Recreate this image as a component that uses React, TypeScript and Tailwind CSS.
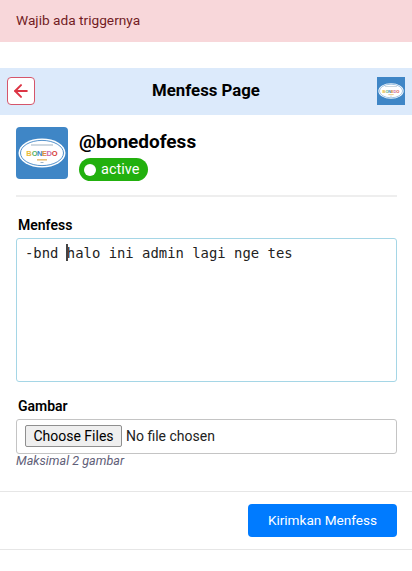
import React from 'react';
import { ArrowLeft } from 'lucide-react';

const Logo: React.FC<{ className?: string }> = ({ className }) => (
  <svg viewBox="0 0 52 52" className={className}>
    <rect width="52" height="52" fill="#3f86c6" />
    <ellipse cx="26" cy="26" rx="23.5" ry="14.5" fill="#ffffff" />
    <ellipse cx="26" cy="26" rx="21.5" ry="12.6" fill="none" stroke="#3f86c6" strokeWidth="0.9" />
    <rect x="15" y="17.5" width="22" height="1" fill="#9fb4c4" />
    <g fontFamily="'Liberation Sans', sans-serif" fontWeight="700" fontSize="7.5" textAnchor="middle">
      <text x="13" y="29" fill="#e8b93a">B</text>
      <text x="18.6" y="29" fill="#58b368">O</text>
      <text x="23.6" y="29" fill="#3f86c6">N</text>
      <text x="28.4" y="29" fill="#e08a3c">E</text>
      <text x="33.2" y="29" fill="#c86dab">D</text>
      <text x="38.6" y="29" fill="#d8403a">O</text>
    </g>
    <rect x="21" y="32" width="10" height="1.6" fill="#e8c17a" />
    <rect x="24.5" y="35" width="3" height="1" fill="#9fb4c4" />
  </svg>
);

export default function App() {
  return (
    <div className="w-[412px] h-[571px] overflow-hidden bg-white text-black font-['Roboto',sans-serif]">
      <div className="h-[42px] bg-[#f8d7da] text-[#721c24] text-[13.7px] leading-[40px] px-4">
        Wajib ada triggernya
      </div>

      <div className="mt-[26px] h-[47px] bg-[#dceafb] flex items-center justify-between pl-[7px] pr-[7px] pb-[1px]">
        <button className="w-[28px] h-[28px] bg-white border border-[#d5566b] rounded-[4px] flex items-center justify-center text-[#dc3545]">
          <ArrowLeft size={20} strokeWidth={2.4} />
        </button>
        <h1 className="text-[16.8px] font-bold">Menfess Page</h1>
        <Logo className="w-[28px] h-[28px]" />
      </div>

      <div className="mx-4 mt-3 pb-[14px] border-b-2 border-[#eeeeee] w-[381px] flex gap-[11px]">
        <Logo className="w-[52px] h-[52px] rounded-[4px]" />
        <div>
          <div className="text-[19px] font-bold leading-[29px]">@bonedofess</div>
          <div className="mt-[2px] w-[69px] h-[23px] rounded-full bg-[#22b00e] flex items-center pl-[5px] gap-[5px] text-white text-[14.5px]">
            <span className="w-[12px] h-[12px] rounded-full bg-white" />
            active
          </div>
        </div>
      </div>

      <form className="px-4">
        <label className="block mt-[20px] ml-[2px] text-[14px] font-semibold leading-[17px]">Menfess</label>
        <div className="relative mt-[4px]">
          <textarea
            defaultValue="-bnd halo ini admin lagi nge tes"
            className="block w-[381px] h-[144px] resize-none outline-none border border-[#a5d6e6] rounded-[3px] py-[4px] px-[8px] text-[13.9px] leading-[20px] text-[#222222] font-['DejaVu_Sans_Mono',monospace]"
          />
          <span className="absolute left-[50px] top-[6px] w-[2px] h-[17px] bg-[#444444]" />
        </div>

        <label className="block mt-[16px] ml-[2px] text-[14px] font-semibold leading-[17px]">Gambar</label>
        <input
          type="file"
          multiple
          className="block mt-[4px] w-[381px] h-[35px] border border-[#c4c4c4] rounded-[3px] pl-[8px] pt-[5px] text-[14px] leading-[19px] text-[#222222] file:h-[22px] file:w-[97px] file:mr-[4px] file:px-0 file:bg-[#efefef] file:border file:border-[#8f8f8f] file:rounded-[2px] file:text-[14px] file:text-black"
        />
        <p className="-mt-[1px] text-[12.6px] italic text-[#5f6078] leading-[15px]">Maksimal 2 gambar</p>
      </form>

      <div className="mt-[23px] h-[59px] border-y border-[#e6e6e6] flex items-center justify-end pr-[15px]">
        <button className="w-[149px] h-[33px] bg-[#007bff] text-white text-[13.6px] rounded-[4px]">
          Kirimkan Menfess
        </button>
      </div>
    </div>
  );
}
